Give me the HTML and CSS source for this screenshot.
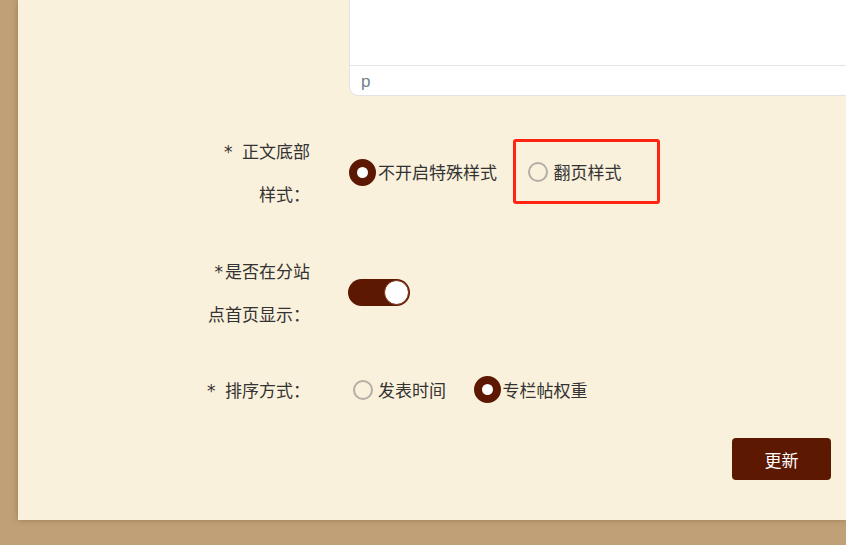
FILE: index.html
```html
<!DOCTYPE html>
<html lang="zh">
<head>
<meta charset="utf-8">
<link rel="stylesheet" href="styles.css">
</head>
<body>
<div class="panel">
  <div class="editor">
    <div class="editor-body"></div>
    <div class="editor-status">p</div>
  </div>
  <div class="form">
    <div class="row">
      <div class="label"><span class="star">*</span> &nbsp;正文底部<br>样式：</div>
      <div class="control radios">
        <label class="opt"><span class="radio-box"><span class="radio checked"></span></span><span class="opt-text">不开启特殊样式</span></label>
        <label class="opt"><span class="radio-box"><span class="radio"></span></span><span class="opt-text">翻页样式</span></label>
      </div>
    </div>
    <div class="row">
      <div class="label"><span class="star">*</span>是否在分站<br>点首页显示：</div>
      <div class="control">
        <span class="toggle"><span class="knob"></span></span>
      </div>
    </div>
    <div class="row">
      <div class="label"><span class="star">*</span> &nbsp;排序方式：</div>
      <div class="control radios">
        <label class="opt"><span class="radio-box"><span class="radio"></span></span><span class="opt-text">发表时间</span></label>
        <label class="opt"><span class="radio-box"><span class="radio checked"></span></span><span class="opt-text">专栏帖权重</span></label>
      </div>
    </div>
    <div class="actions">
      <button class="btn">更新</button>
    </div>
  </div>
  <div class="highlight"></div>
</div>
</body>
</html>
```

FILE: styles.css
```css
html, body {
  margin: 0;
  padding: 0;
}
body {
  background: #bfa077;
  width: 846px;
  height: 545px;
  overflow: hidden;
  font-family: "Noto Sans CJK SC", "Noto Sans", sans-serif;
  color: #333333;
}
.panel {
  position: relative;
  margin-left: 18px;
  height: 520px;
  background: #faf1dc;
  box-shadow: 0 0 6px rgba(90, 60, 20, 0.35);
}
.editor {
  margin-left: 331px;
  height: 96px;
  box-sizing: border-box;
  background: #ffffff;
  border-left: 1px solid #e3e3e3;
  border-bottom: 1px solid #e3e3e3;
  border-bottom-left-radius: 9px;
  display: flex;
  flex-direction: column;
}
.editor-body {
  height: 65px;
  border-bottom: 1px solid #e3e3e3;
}
.editor-status {
  flex: 1;
  padding-left: 11px;
  padding-top: 3px;
  font-family: "Liberation Sans", Arial, sans-serif;
  font-size: 17px;
  line-height: 26px;
  color: #6f7f8f;
}
.form {
  padding-top: 33px;
}
.row {
  display: flex;
  align-items: center;
  margin-bottom: 34px;
}
.row:nth-child(2) {
  margin-bottom: 33px;
}
.row:nth-child(3) {
  margin-bottom: 27px;
}
.label {
  width: 118px;
  margin-left: 174px;
  text-align: right;
  font-size: 17px;
  line-height: 43px;
  white-space: nowrap;
}
.star {
  font-family: "DejaVu Sans", sans-serif;
  font-size: 17px;
  line-height: 0;
  margin-right: 2px;
}
.control {
  margin-left: 38px;
  display: flex;
  align-items: center;
}
.radios {
  gap: 27px;
  margin-left: 38.5px;
}
.opt {
  display: flex;
  align-items: center;
  font-size: 17px;
  line-height: 24px;
  color: #333333;
}
.radio-box {
  width: 28px;
  height: 28px;
  display: flex;
  align-items: center;
  justify-content: center;
}
.radio {
  box-sizing: border-box;
  width: 20px;
  height: 20px;
  border-radius: 50%;
  border: 2px solid #b3aea6;
  background: transparent;
}
.radio.checked {
  width: 27px;
  height: 27px;
  border: 8.5px solid #5c1800;
  background: #ffffff;
}
.opt-text {
  margin-left: 1.5px;
}
.toggle {
  position: relative;
  display: block;
  width: 62px;
  height: 27px;
  border-radius: 14px;
  background: #5c1800;
}
.knob {
  position: absolute;
  right: 1px;
  top: 1px;
  width: 25px;
  height: 25px;
  box-sizing: border-box;
  border-radius: 50%;
  background: #ffffff;
  border: 1px solid #7a2a10;
}
.actions {
  display: flex;
  justify-content: flex-end;
  padding-right: 15px;
}
.btn {
  width: 99px;
  height: 42px;
  border: none;
  border-radius: 4px;
  background: #5c1800;
  color: #ffffff;
  font-family: "Noto Sans CJK SC", sans-serif;
  font-size: 17px;
  padding: 0;
}
.highlight {
  position: absolute;
  left: 495px;
  top: 139px;
  width: 147px;
  height: 65px;
  box-sizing: border-box;
  border: 3px solid #ff2414;
  border-radius: 3px;
}
```
